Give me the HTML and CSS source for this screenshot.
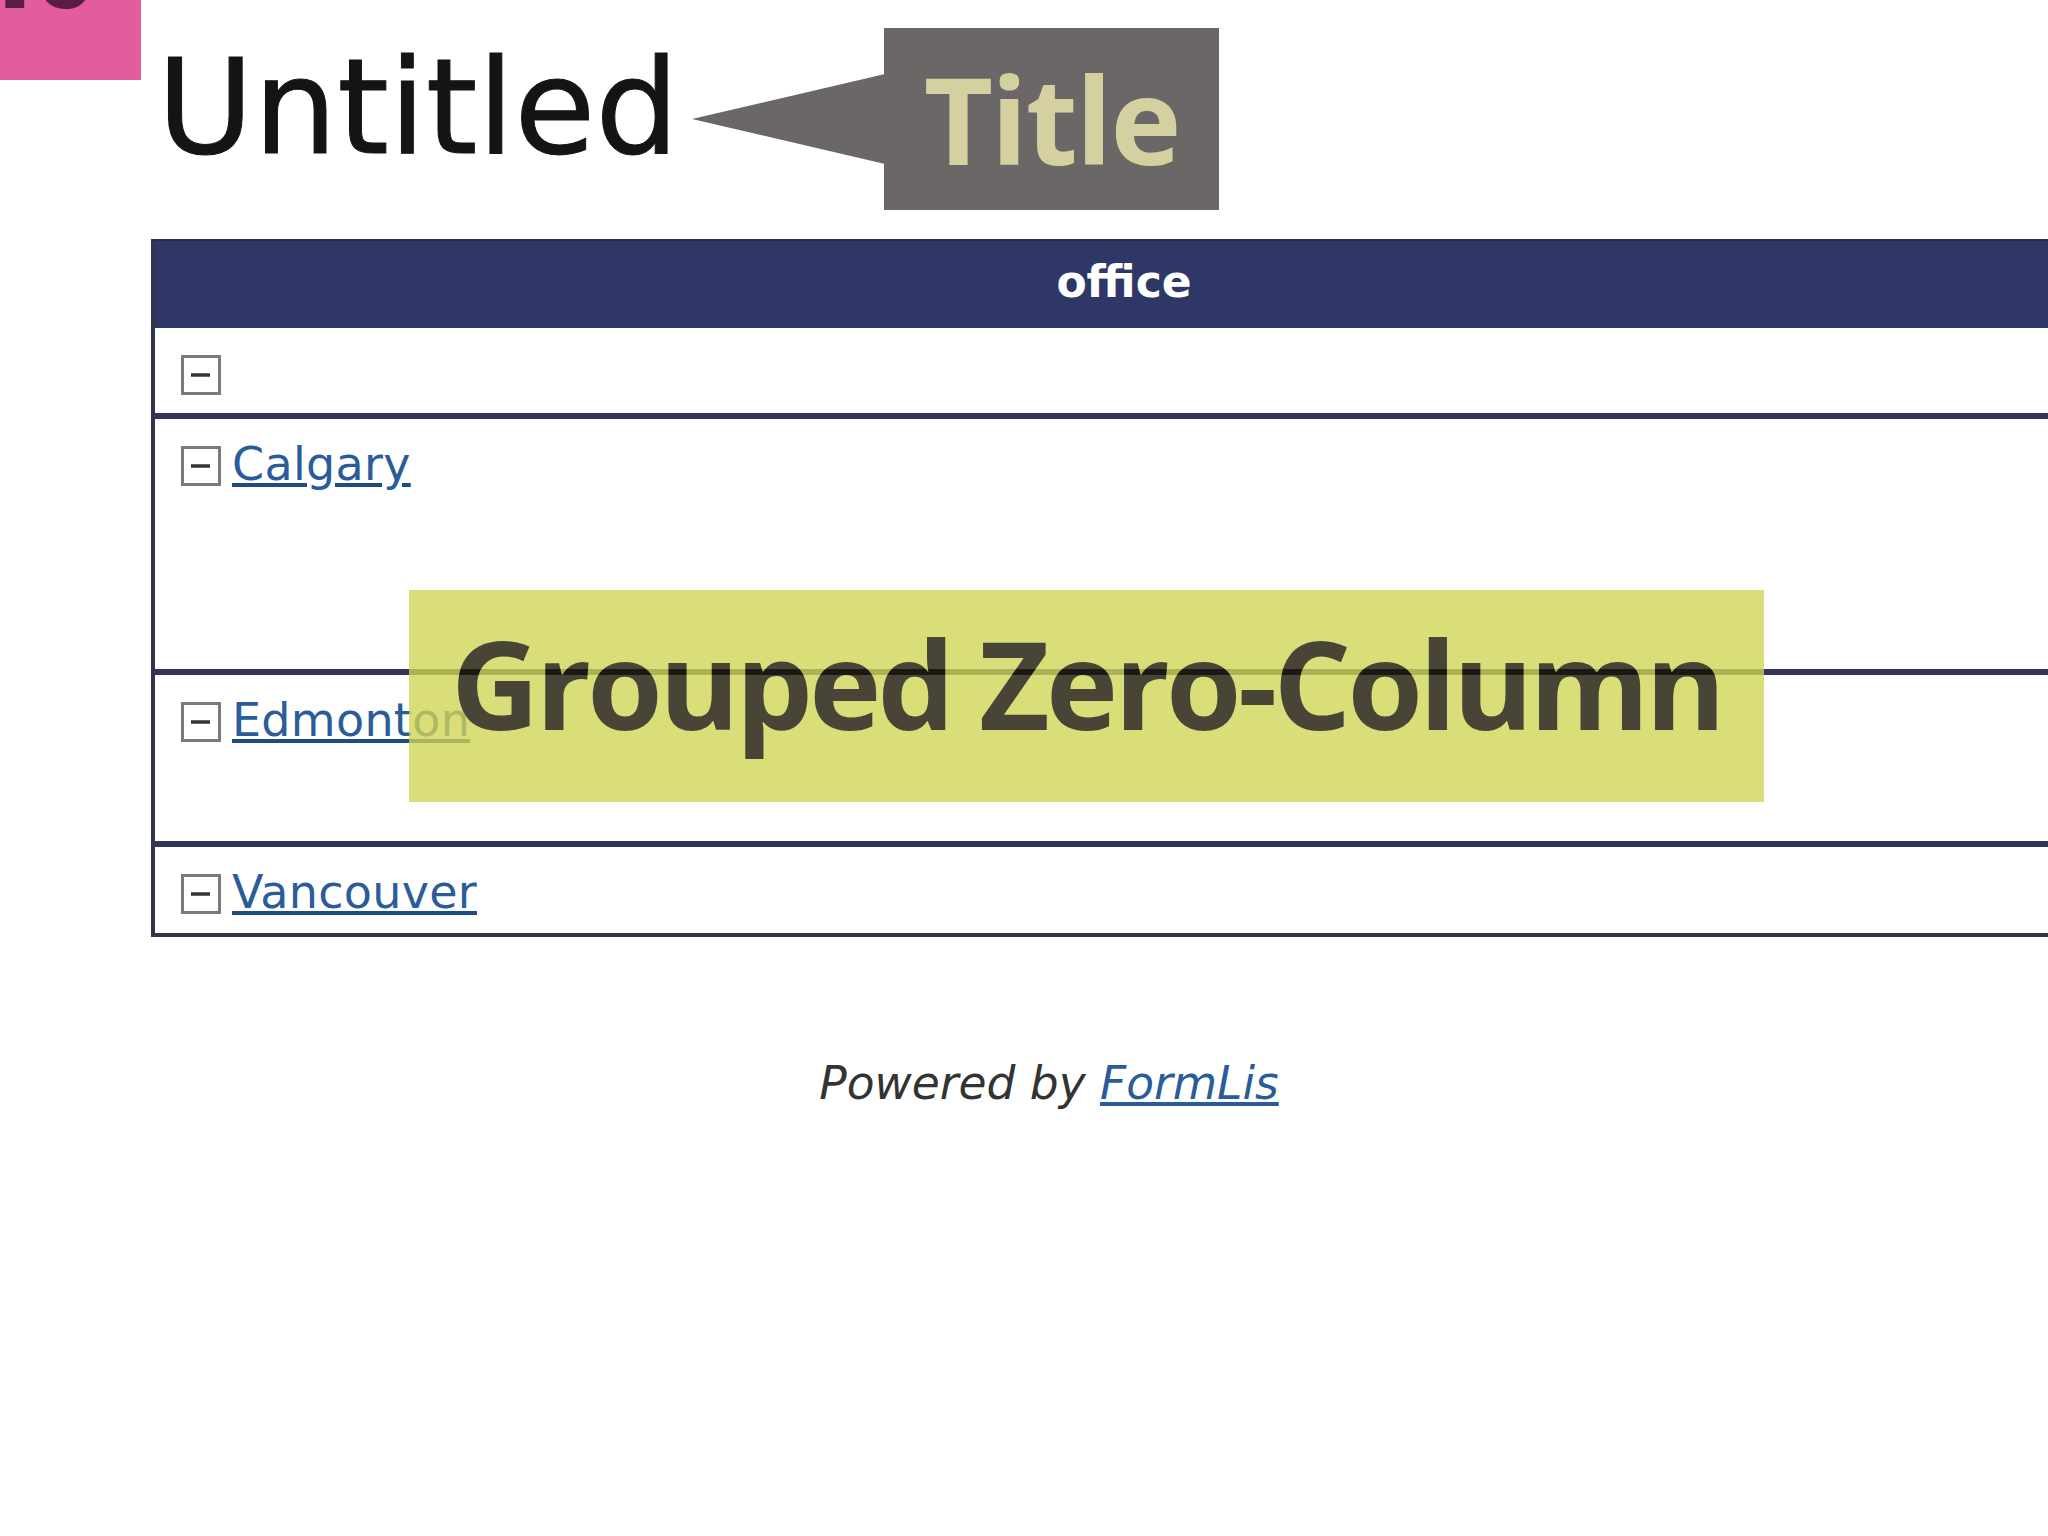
FILE: index.html
```html
<!DOCTYPE html>
<html>
<head>
<meta charset="utf-8">
<title>Untitled</title>
<link rel="stylesheet" href="styles.css">
</head>
<body>
<div class="page">
  <h1 class="title">Untitled</h1>

  <div class="grid">
    <div class="grid-head">office</div>

    <div class="group">
      <div class="group-line">
        <svg class="toggle" viewBox="0 0 40 40" width="40" height="40"><rect x="1.5" y="1.5" width="37" height="37" fill="#fff" stroke="#7a7a7a" stroke-width="3"/><line x1="10" y1="20" x2="29" y2="20" stroke="#333" stroke-width="3.5"/></svg>
      </div>
    </div>

    <div class="group">
      <div class="group-line">
        <svg class="toggle" viewBox="0 0 40 40" width="40" height="40"><rect x="1.5" y="1.5" width="37" height="37" fill="#fff" stroke="#7a7a7a" stroke-width="3"/><line x1="10" y1="20" x2="29" y2="20" stroke="#333" stroke-width="3.5"/></svg>
        <a class="group-link" href="#">Calgary</a>
      </div>
      <div class="group-body tall"></div>
    </div>

    <div class="group">
      <div class="group-line">
        <svg class="toggle" viewBox="0 0 40 40" width="40" height="40"><rect x="1.5" y="1.5" width="37" height="37" fill="#fff" stroke="#7a7a7a" stroke-width="3"/><line x1="10" y1="20" x2="29" y2="20" stroke="#333" stroke-width="3.5"/></svg>
        <a class="group-link" href="#">Edmonton</a>
      </div>
      <div class="group-body medium"></div>
    </div>

    <div class="group last">
      <div class="group-line">
        <svg class="toggle" viewBox="0 0 40 40" width="40" height="40"><rect x="1.5" y="1.5" width="37" height="37" fill="#fff" stroke="#7a7a7a" stroke-width="3"/><line x1="10" y1="20" x2="29" y2="20" stroke="#333" stroke-width="3.5"/></svg>
        <a class="group-link" href="#">Vancouver</a>
      </div>
    </div>
  </div>

  <div class="footer">Powered by <a class="footer-link" href="#">FormLis</a></div>
</div>

<div class="badge"><span class="badge-num">16</span></div>
<div class="callout">Title</div>
<div class="caption">Grouped Zero-Column</div>
</body>
</html>
```

FILE: styles.css
```css
html, body {
  margin: 0;
  padding: 0;
  background: #ffffff;
  overflow: hidden;
}

.page {
  width: 2098px;
  padding-top: 32px;
  font-family: "DejaVu Sans", Verdana, sans-serif;
}

.title {
  margin: 0 0 0 157px;
  font-family: "DejaVu Sans", Verdana, sans-serif;
  font-weight: normal;
  font-size: 132px;
  line-height: 150px;
  color: #141414;
  -webkit-text-stroke: 1px #141414;
}

.grid {
  margin: 57px 0 0 151px;
  width: 1942px;
  border-left: 4px solid #33354f;
  border-top: 2px solid #2b2d45;
  border-bottom: 4px solid #33354f;
  box-sizing: border-box;
}

.grid-head {
  height: 87px;
  background: #2f3766;
  color: #ffffff;
  font-weight: bold;
  font-size: 44px;
  line-height: 82px;
  text-align: center;
}

.group {
  padding: 27px 0 18px 26px;
}

.group + .group {
  border-top: 6px solid #32355a;
}

.group.last {
  padding-bottom: 19px;
}

.group-line {
  display: flex;
  align-items: flex-start;
  gap: 11px;
  height: 40px;
}

.toggle {
  display: block;
  flex: none;
}

.group-link {
  font-size: 46px;
  line-height: 36px;
  letter-spacing: 0.3px;
  color: #2b5c9a;
  text-decoration: underline;
  text-decoration-color: #1f4c80;
}

.group-body.tall {
  height: 165px;
}

.group-body.medium {
  height: 81px;
}

.footer {
  margin-top: 120px;
  text-align: center;
  font-style: italic;
  font-size: 45.5px;
  color: #333333;
}

.footer-link {
  color: #2b5c9a;
  text-decoration: underline;
}

/* annotation overlays */
.badge {
  position: absolute;
  left: 0;
  top: 0;
  width: 141px;
  height: 80px;
  background: #e35c9c;
  overflow: hidden;
}

.badge-num {
  display: block;
  margin: -77px 0 0 -20px;
  font-family: "Open Sans", sans-serif;
  font-weight: 800;
  font-size: 96px;
  line-height: 96px;
  color: #5a1c41;
}

.callout {
  position: absolute;
  left: 884px;
  top: 28px;
  width: 335px;
  height: 182px;
  background: #6a6766;
  color: #d4d0a0;
  font-family: "Open Sans", sans-serif;
  font-weight: 700;
  font-size: 120px;
  line-height: 182px;
  text-align: center;
  letter-spacing: -2px;
}

.callout::before {
  content: "";
  position: absolute;
  left: -192px;
  top: 46px;
  width: 193px;
  height: 90px;
  background: #6a6766;
  clip-path: polygon(0 50%, 100% 0, 100% 100%);
}

.caption {
  position: absolute;
  left: 409px;
  top: 590px;
  width: 1355px;
  height: 212px;
  background: #cfd554;
  color: #151200;
  opacity: 0.78;
  font-family: "Open Sans", sans-serif;
  font-weight: 700;
  font-size: 122px;
  line-height: 186px;
  text-align: center;
  letter-spacing: -3.7px;
}
```
